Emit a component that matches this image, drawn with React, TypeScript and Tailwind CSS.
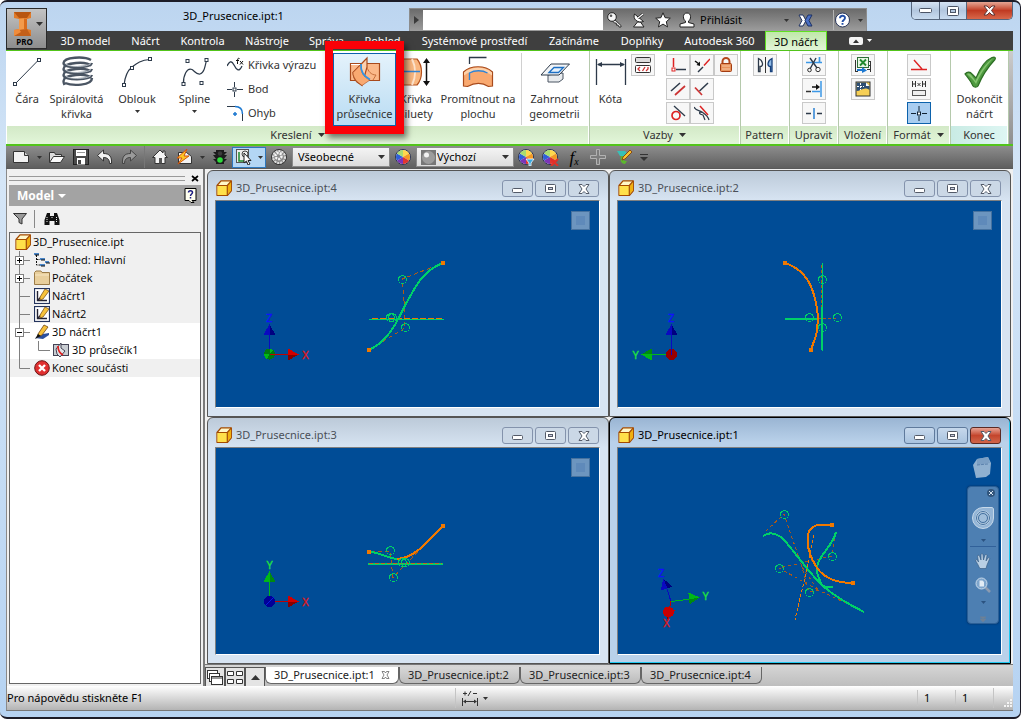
import type { ReactNode } from "react";

const FONT = "font-['Noto_Sans','Open_Sans',sans-serif]";
const GREEN = "#00d068";
const ORANGE = "#f07800";

/* ---------- small shared pieces ---------- */

function Icon({ w = 16, h = 16, children }: { w?: number; h?: number; children: ReactNode }) {
    return (
        <svg width={w} height={h} viewBox={`0 0 ${w} ${h}`} fill="none" className="shrink-0" aria-hidden="true">
            {children}
        </svg>
    );
}

function Caret({ color = "#333333" }: { color?: string }) {
    return (
        <Icon w={7} h={4}>
            <path d="M0 0h7L3.500 4z" fill={color} />
        </Icon>
    );
}

function SmallCaret({ color = "#333333" }: { color?: string }) {
    return (
        <Icon w={5} h={3}>
            <path d="M0 0h5L2.500 3z" fill={color} />
        </Icon>
    );
}

function Node({ x, y }: { x: number; y: number }) {
    return <rect x={x - 1.5} y={y - 1.5} width="3" height="3" fill="#fff" stroke="#2d3a4a" />;
}

function PartIcon() {
    return (
        <Icon>
            <path d="M1 5.500 5 .8h10.300v10L11.500 15.300H1z" fill="#fff7c8" stroke="#a34a00" strokeWidth="1.300" strokeLinejoin="round" />
            <path d="M1.500 6h9.500v9H1.500z" fill="#ffe04a" />
            <path d="M11.500 5.500 15 1.500v9l-3.500 4z" fill="#f0b010" />
            <path d="M1 5.500h10.300v9.800M11.300 5.500l4-4.700" stroke="#a34a00" strokeWidth="1.200" />
        </Icon>
    );
}

/* ---------- title bar ---------- */

function AppButton() {
    return (
        <button aria-label="Inventor PRO" className="absolute left-0 top-1.5 z-20 flex h-[41px] w-[41px] flex-col items-center border border-[#2a2a2a] bg-linear-to-b from-[#c4c4c4] to-[#8d8d8d]">
            <span className="flex w-full items-center gap-1 pl-1.5 pt-0.5">
                <Icon w={19} h={26}>
                    <path d="M1 1h17v6l-4 1v10l4 1v6H1v-6l5-1V8L1 7z" fill="#e07a28" />
                    <path d="M1 1h17l-4 6H6z" fill="#b85510" />
                    <path d="M6 8l8-1v11l-8 1z" fill="#f39a4a" />
                    <path d="M11 7.500h3V18h-3z" fill="#d86c1c" />
                    <path d="M1 25l5-6 8-1 4 7z" fill="#c4601a" />
                    <path d="M1 19l5-1 2 3-7 4z" fill="#f08c3c" />
                </Icon>
                <Caret />
            </span>
            <span className="pr-1 text-[8px] font-bold leading-[9px] text-black">PRO</span>
        </button>
    );
}

function SearchBar() {
    return (
        <div className="flex h-[23px] w-[458px] items-center self-end border border-b-0 border-[#8c8c8c] bg-linear-to-b from-[#6b6b6b] to-[#9d9d9d]">
            <button aria-label="Rozbalit" className="flex h-full w-[13px] items-center justify-center">
                <Icon w={5} h={8}>
                    <path d="M0 0v8l5-4z" fill="#3a3a3a" />
                </Icon>
            </button>
            <input aria-label="Hledat" className="h-5 w-[180px] bg-white px-1 text-[11px] outline-none" />
            <button aria-label="Klíč" className="flex w-6 justify-center">
                <Icon>
                    <path d="M7 7l7 6.500v1.500h-2l-1-2-1.500.2-.2-2L7.500 11 5.500 9z" fill="#e4e4e4" stroke="#222" strokeWidth=".9" />
                    <circle cx="5" cy="5" r="4.300" fill="#f6f6f6" stroke="#222" />
                    <circle cx="4" cy="3.800" r="1.300" fill="#555" />
                </Icon>
            </button>
            <button aria-label="Komunikační centrum" className="flex w-6 justify-center">
                <Icon>
                    <path d="M2.500 15h10.500l-3.500-5H6.500z" fill="#f6f6f6" stroke="#222" />
                    <path d="M3.500 2c-2 5 3 9.500 9 7.500z" fill="#fff" stroke="#222" />
                    <path d="M7 6l5-4" stroke="#222" strokeWidth="2.500" />
                    <path d="M7 6l5-4" stroke="#fff" strokeWidth="1.200" />
                </Icon>
            </button>
            <button aria-label="Oblíbené" className="flex w-6 justify-center">
                <Icon>
                    <path d="M8 .8l2.100 4.900 5.200.5-4 3.500 1.200 5.200L8 12.100 3.500 14.900l1.200-5.200-4-3.500 5.200-.5z" fill="#fff" stroke="#222" />
                </Icon>
            </button>
            <button className="flex w-[118px] items-center pl-1 pr-1 text-[11px] text-black">
                <Icon>
                    <path d="M8 1c5 0 4 7 1.500 8v1.500l5.500 1.500v3H1v-3l5.500-1.500V9C4 8 3 1 8 1z" fill="#fff" stroke="#222" />
                </Icon>
                <span className="flex-1 pl-[5px] text-left">Přihlásit</span>
                <SmallCaret />
            </button>
            <button aria-label="Exchange" className="mr-4 flex w-6 justify-center">
                <Icon w={15} h={13}>
                    <path d="M1 1h4l3 5.500L5 12H1l3-5.500z" fill="#fff" stroke="#1f3364" />
                    <path d="M14 1h-4L7 6.500 10 12h4l-3-5.500z" fill="#4a6fc4" stroke="#1f3364" />
                </Icon>
            </button>
            <span className="h-5 w-px bg-[#b5b5b5]" />
            <button aria-label="Nápověda" className="flex w-8 items-center gap-2 pl-px">
                <Icon w={15} h={16}>
                    <circle cx="7.500" cy="8" r="7" fill="#fff" stroke="#27345a" />
                    <path d="M5 6.300c0-3.300 5-3.300 5-.3 0 1.900-2.500 1.900-2.500 4M7.500 11v1.700" stroke="#2450a8" strokeWidth="1.900" />
                </Icon>
                <SmallCaret />
            </button>
        </div>
    );
}

function WindowButtons() {
    return (
        <div className="ml-11 flex h-[18px] w-[102px] self-start overflow-hidden rounded-b-[5px] border border-t-0 border-[#55657c]">
            <button aria-label="Minimalizovat" className="flex w-7 items-center justify-center border-r border-[#55657c] bg-linear-to-b from-[#d5e3f3] via-[#b3c7df] to-[#c9dcf0]">
                <Icon w={13} h={5}>
                    <rect x=".5" y=".5" width="12" height="4" rx="1" fill="#fff" stroke="#4c5566" />
                </Icon>
            </button>
            <button aria-label="Maximalizovat" className="flex w-[27px] items-center justify-center border-r border-[#55657c] bg-linear-to-b from-[#d5e3f3] via-[#b3c7df] to-[#c9dcf0]">
                <Icon w={12} h={10}>
                    <rect x=".5" y=".5" width="11" height="9" rx="1" fill="#fff" stroke="#4c5566" />
                    <rect x="3.500" y="3.500" width="5" height="3" fill="#b3c7df" stroke="#4c5566" />
                </Icon>
            </button>
            <button aria-label="Zavřít" className="flex flex-1 items-center justify-center bg-linear-to-b from-[#e4a594] via-[#c03a22] to-[#d8674a]">
                <Icon w={13} h={11}>
                    <path d="M1 1h3l2.500 2.500L9 1h3L8.500 5.500 12 10H9L6.500 7.500 4 10H1l3.500-4.500z" fill="#fff" stroke="#5b3434" />
                </Icon>
            </button>
        </div>
    );
}

/* ---------- ribbon ---------- */

const tabs = [
    { label: "3D model", width: "w-[71px]" },
    { label: "Náčrt", width: "w-[49px]" },
    { label: "Kontrola", width: "w-[65px]" },
    { label: "Nástroje", width: "w-16" },
    { label: "Správa", width: "w-[55px]" },
    { label: "Pohled", width: "w-[57px]" },
    { label: "Systémové prostředí", width: "w-[127px]" },
    { label: "Začínáme", width: "w-[72px]" },
    { label: "Doplňky", width: "w-16" },
    { label: "Autodesk 360", width: "w-[91px]" },
];

function RibbonTabs() {
    return (
        <nav className="flex h-[19px] shrink-0 items-center bg-[#3f3f3f] pl-11 text-[11px] text-white">
            {tabs.map((tab) => (
                <button key={tab.label} className={`${tab.width} shrink-0 whitespace-nowrap text-center leading-[18px]`}>
                    {tab.label}
                </button>
            ))}
            <button className="h-full w-[62px] shrink-0 whitespace-nowrap border border-b-0 border-[#5fe020] bg-linear-to-b from-[#bfe8a8] to-[#e2f5d8] leading-[17px] text-black">3D náčrt</button>
            <button aria-label="Sbalit pás" className="ml-[22px] flex items-center gap-1">
                <Icon w={14} h={8}>
                    <rect width="14" height="8" rx="2" fill="#f4f4f4" />
                    <path d="M4 6h6L7 2.500z" fill="#333" />
                </Icon>
                <SmallCaret color="#ffffff" />
            </button>
        </nav>
    );
}

function BigButton({ icon, lines, width, menu, active }: { icon: ReactNode; lines: string[]; width: string; menu?: boolean; active?: boolean }) {
    return (
        <button
            className={`${width} flex h-[73px] shrink-0 flex-col items-center whitespace-nowrap border pt-0.5 ${
                active ? "border-[#0c62ac] bg-linear-to-b from-[#e4f2fb] to-[#b9dcf3]" : "border-transparent"
            }`}
        >
            {icon}
            <span className="mt-[3px] flex flex-col items-center text-[11px] leading-[15px]">
                {lines.map((line) => (
                    <span key={line}>{line}</span>
                ))}
            </span>
            {menu && (
                <span className="mt-1">
                    <SmallCaret />
                </span>
            )}
        </button>
    );
}

function SmallButton({ icon, label, active }: { icon: ReactNode; label: string; active?: boolean }) {
    return (
        <button
            aria-label={label}
            className={`flex h-[22px] w-6 items-center justify-center border ${active ? "border-[#0c62ac] bg-[#a9cdf0]" : "border-[#c9c9c9] bg-[#f7f7f7]"}`}
        >
            {icon}
        </button>
    );
}

function Panel({ title, width, menu, blue, children }: { title: string; width: string; menu?: boolean; blue?: boolean; children: ReactNode }) {
    return (
        <section className={`${width} flex shrink-0 flex-col border-r border-[#b5c9ac]`}>
            <div className="flex h-[75px] pt-0.5">{children}</div>
            <h2
                className={`mr-px flex h-[18px] items-center justify-center gap-1.5 text-[11px] text-[#333] ${
                    blue ? "bg-linear-to-r from-[#c9ebe4] to-[#def6f3]" : "bg-linear-to-b from-[#d3e9c7] to-[#e2f6d9]"
                }`}
            >
                {title}
                {menu && <Caret />}
            </h2>
        </section>
    );
}

const lineIcon = (
    <Icon w={32} h={32}>
        <path d="M4 28 28 3.500" stroke="#2d3a4a" />
        <Node x={4} y={28} />
        <Node x={28} y={4} />
    </Icon>
);

const coilIcon = (
    <Icon w={34} h={32}>
        <g stroke="#4a5563" strokeWidth="2.400">
            <path d="M31 4C24 0 4 1 3.500 7c0 6 27 5.500 28.500 0" />
            <path d="M31 10c-4-5-27-4-27.500 3 0 6 27 5.500 28.500 0" />
            <path d="M31 16c-4-5-27-4-27.500 3 0 6 27 5.500 28.500 0" />
            <path d="M31 22c-4-5-27-4-27.500 3 0 1 0 2 1 4M32 22c0 8-20 8-27 5" />
        </g>
        <g stroke="#d3d9e0" strokeWidth=".8">
            <path d="M5 7c1 4.500 22 4.500 26 .5M5 13c1 4.500 22 4.500 26 .5M5 19c1 4.500 22 4.500 26 .5" />
        </g>
    </Icon>
);

const arcIcon = (
    <Icon w={32} h={32}>
        <path d="M3 29C4 20 6 15 11 11S20 4 29 3.500" stroke="#2d3a4a" strokeWidth="1.200" />
        <Node x={3} y={29} />
        <Node x={11} y={12} />
        <Node x={29} y={3} />
    </Icon>
);

const splineIcon = (
    <Icon w={32} h={32}>
        <path d="M4.500 28C4 20 8 11 13 13.500c3 2 4 5 8 4.500 4-1 5-7 6.500-14" stroke="#2d3a4a" strokeWidth="1.200" />
        <Node x={4.500} y={28} />
        <Node x={8.500} y={5} />
        <Node x={22.500} y={27} />
        <Node x={27.500} y={4} />
    </Icon>
);

const intersectionIcon = (
    <Icon w={32} h={32}>
        <path d="M1.500 7.500h29v17h-29z" fill="#fbb98a" stroke="#a84a1c" strokeWidth="1.200" />
        <path d="M4 16.500 18 2v9L13 29.500 8 26C5 23 4 20 4 16.500z" fill="#fcd0ae" stroke="#a84a1c" strokeWidth="1.200" />
        <path d="M12 8.500C11 15 14 21 21 24l-8 5.500-5-4C5 22 4 19 4 16.500z" fill="#f9a970" stroke="#a84a1c" strokeWidth=".6" />
        <path d="M18 11c1 4 4 8 9 8l-3 5" stroke="#c8703c" />
        <path d="M12 8c-.5 7 2 12 9 15.500" stroke="#2f94e6" strokeWidth="1.700" />
        <path d="M2 8.500h9" stroke="#fff" />
    </Icon>
);

const silhouetteIcon = (
    <Icon w={38} h={32}>
        <path d="M0 3h20c6 7 6 19 0 26H0z" fill="#f9b780" stroke="#b4501c" strokeWidth="1.200" />
        <path d="M15 3c4 8 4 18 0 26" stroke="#fde3cc" strokeWidth="2" />
        <path d="M2 15.500h21" stroke="#2f84d6" strokeWidth="1.500" />
        <path d="M29.500 5v22" stroke="#111" strokeWidth="1.500" />
        <path d="M26 7l3.500-5L33 7zM26 25l3.500 5 3.500-5z" fill="#111" />
    </Icon>
);

const projectIcon = (
    <Icon w={32} h={32}>
        <path d="M7.500 8V1.500h17" stroke="#2d3a4a" strokeWidth="1.300" />
        <path d="M1.500 16C9 9 23 9 30.500 16v14l-4 .5c-6-4-14-4-21 0l-4-.5z" fill="#f9a970" stroke="#a84a1c" strokeWidth="1.200" />
        <path d="M2 16.500C9 10 23 10 30 16.500v3c-7-6-21-6-28 0z" fill="#fcd2ac" />
        <path d="M7.500 24v-7c5-3 13-3 18 0" stroke="#2f84d6" strokeWidth="1.400" />
    </Icon>
);

const includeIcon = (
    <Icon w={32} h={32}>
        <path d="M9 19v7h11l4-3v-6z" fill="#e8ebee" stroke="#4a5563" />
        <path d="M2 19 12 8h18.500L20 19z" fill="#f3f5f7" stroke="#2d3a4a" />
        <path d="M10 16.500l5-5h9.500l-5 5z" fill="#e6f1fb" stroke="#1c6fc4" strokeWidth="1.300" />
    </Icon>
);

const dimensionIcon = (
    <Icon w={32} h={32}>
        <path d="M1.500 3v26M30.500 3v26M3 8.500h26" stroke="#2d3a4a" strokeWidth="1.300" />
        <path d="M2 8.500l5-2.500v5zM30 8.500 25 6v5z" fill="#2d3a4a" />
    </Icon>
);

function DrawPanel() {
    return (
        <Panel title="Kreslení" width="w-[583px]" menu>
            <BigButton icon={lineIcon} lines={["Čára"]} width="w-10" />
            <BigButton icon={coilIcon} lines={["Spirálovitá", "křivka"]} width="w-[59px]" />
            <BigButton icon={arcIcon} lines={["Oblouk"]} width="w-[62px]" menu />
            <BigButton icon={splineIcon} lines={["Spline"]} width="w-[53px]" menu />
            <div className="flex w-[105px] shrink-0 flex-col pl-1.5 text-[11px]">
                <button className="flex h-6 items-center gap-1 whitespace-nowrap">
                    <Icon w={17}>
                        <path d="M0 9c3-6 5-5 7-1s5 8 8 1" stroke="#2d3a4a" strokeWidth="1.300" />
                        <path d="M12.500 1.500c-2-1-2 1-2 5.500M9 3.500h3M13 4l3 3.500M16 4l-3 3.500" stroke="#111" />
                    </Icon>
                    Křivka výrazu
                </button>
                <button className="flex h-6 items-center gap-1 whitespace-nowrap">
                    <Icon w={17}>
                        <path d="M0 8.500h5M10 8.500h6M7.500 1v5M7.500 11v5" stroke="#2d3a4a" />
                        <Node x={7.500} y={8.500} />
                    </Icon>
                    Bod
                </button>
                <button className="flex h-6 items-center gap-1 whitespace-nowrap">
                    <Icon w={17}>
                        <path d="M0 1.500h8M15.500 9v7" stroke="#2d3a4a" />
                        <path d="M8 1.500c5 0 7.500 3 7.500 7.500" stroke="#1c78d0" strokeWidth="1.500" />
                        <path d="M6 9h4M8 7v4" stroke="#1c78d0" strokeWidth="1.500" />
                    </Icon>
                    Ohyb
                </button>
            </div>
            {/* Highlighted tool with its callout frame */}
            <div className="relative ml-[7px] mr-px w-[63px] shrink-0">
                <BigButton icon={intersectionIcon} lines={["Křivka", "průsečnice"]} width="w-[63px]" active />
                <div className="pointer-events-none absolute -inset-x-2 -bottom-2 -top-3 z-20 border-[8px] border-[#fb0007] shadow-[3px_4px_6px_rgba(0,0,0,0.5)]" />
            </div>
            <BigButton icon={silhouetteIcon} lines={["Křivka", "siluety"]} width="w-[38px]" />
            <BigButton icon={projectIcon} lines={["Promítnout na", "plochu"]} width="w-[86px]" />
            <span className="h-[72px] w-px bg-[#d0d0d0]" />
            <BigButton icon={includeIcon} lines={["Zahrnout", "geometrii"]} width="w-[65px]" />
        </Panel>
    );
}

function ConstraintPanel() {
    return (
        <Panel title="Vazby" width="w-[151px]" menu>
            <BigButton icon={dimensionIcon} lines={["Kóta"]} width="w-[41px]" />
            <div className="pt-px">
                <SmallButton
                    label="Automatické vazby"
                    icon={
                        <Icon w={18}>
                            <rect x="1.500" y=".5" width="15" height="5" rx="1" fill="#ddd" stroke="#333" />
                            <rect x="1.500" y="8.500" width="15" height="7" rx="1" fill="#fff" stroke="#333" />
                            <path d="M6 10l-2 2 2 2M11 10l-2.500 4M14 10v2l-2 2" stroke="#c33" strokeWidth="1.300" />
                        </Icon>
                    }
                />
            </div>
            <div className="ml-[11px] grid h-[72px] grid-cols-3 content-start gap-y-0.5 pt-px">
                <SmallButton label="Kolmost" icon={<Icon><path d="M3.500 1v9" stroke="#d22" strokeWidth="1.500" /><path d="M6 12.500h10" stroke="#2d3a4a" strokeWidth="1.500" /><rect x="2" y="11" width="3" height="3" fill="#fff" stroke="#d22" /></Icon>} />
                <SmallButton label="Kolineární" icon={<Icon><path d="M1 4l4 3" stroke="#111" strokeWidth="1.500" /><path d="M6 9V4.500L2.500 8z" fill="#111" /><path d="M4 15l5-5" stroke="#2d3a4a" strokeWidth="1.500" /><path d="M10 8.500 16 2" stroke="#d22" strokeWidth="1.500" /></Icon>} />
                <SmallButton label="Pevná" icon={<Icon><path d="M4.500 7V4.500a3.500 3.500 0 0 1 7 0V7" stroke="#b5481c" strokeWidth="2" /><rect x="2.500" y="6.500" width="11" height="8" rx="1" fill="#e8925c" stroke="#a33c12" /><path d="M4 9h8M4 12h8" stroke="#f8c7a4" /></Icon>} />
                <SmallButton label="Rovnoběžnost" icon={<Icon><path d="M1 10l9-8" stroke="#2d3a4a" strokeWidth="1.500" /><path d="M5 14 15 5" stroke="#c33" strokeWidth="1.700" /></Icon>} />
                <SmallButton label="Kolmá" icon={<Icon><path d="M5.500 10 14 2" stroke="#2d3a4a" strokeWidth="1.500" /><path d="M1 6.500 8 14" stroke="#c33" strokeWidth="1.700" /></Icon>} />
                <span />
                <SmallButton label="Tečnost" icon={<Icon><circle cx="6" cy="10.500" r="4" stroke="#d22" strokeWidth="1.700" /><path d="M4 1l11 10" stroke="#2d3a4a" strokeWidth="1.300" /></Icon>} />
                <SmallButton label="Hladkost" icon={<Icon><path d="M0 2c2 4 5 3 8 5s6 4 7 8M8 7.500C5 6 4 9 9 10l2 5" stroke="#2d3a4a" strokeWidth="1.200" /><path d="M6 1l8 9" stroke="#d22" strokeWidth="1.500" /></Icon>} />
            </div>
        </Panel>
    );
}

function Ribbon() {
    return (
        <div className="flex h-24 shrink-0 border-b-2 border-t border-[#52c41a] bg-white pl-px text-[#333]">
            <DrawPanel />
            <ConstraintPanel />
            <Panel title="Pattern" width="w-[49px]">
                <div className="mx-auto pt-px">
                    <SmallButton label="Zrcadlit" icon={<Icon><path d="M1.500 1.500v13h1.500v-5c4 0 3-6-1.500-8z" fill="#fff" stroke="#2d3a4a" strokeWidth="1.300" /><path d="M8.500 0v16" stroke="#333" /><path d="M15 1.500v13h-1.500v-5c-4 0-3-6 1.500-8z" fill="#8fb9e4" stroke="#16407c" strokeWidth="1.300" /></Icon>} />
                </div>
            </Panel>
            <Panel title="Upravit" width="w-[49px]">
                <div className="mx-auto flex flex-col gap-0.5 pt-px">
                    <SmallButton label="Oříznout" icon={<Icon><path d="M0 5.500h16M13.500 0v5" stroke="#3b97e6" strokeWidth="1.700" /><path d="M4 1l7 10M10 1 4 12" stroke="#2d3a4a" strokeWidth="1.400" /><circle cx="3.500" cy="13" r="1.800" stroke="#333" /><circle cx="12" cy="12.500" r="2.200" stroke="#333" /></Icon>} />
                    <SmallButton label="Prodloužit" icon={<Icon><path d="M15 0v16" stroke="#3b97e6" strokeWidth="1.500" /><path d="M0 10.500h5" stroke="#333" strokeWidth="1.300" /><path d="M6 10.500h8" stroke="#3b97e6" strokeWidth="1.500" /><path d="M6 6h5" stroke="#111" strokeWidth="1.500" /><path d="M10 3l4 3-4 3z" fill="#111" /></Icon>} />
                    <SmallButton label="Rozdělit" icon={<Icon><path d="M0 8.500h5M11 8.500h5" stroke="#2d3a4a" strokeWidth="1.400" /><path d="M8 3v11" stroke="#1c78d0" strokeWidth="1.400" /></Icon>} />
                </div>
            </Panel>
            <Panel title="Vložení" width="w-[49px]">
                <div className="mx-auto flex flex-col gap-0.5 pt-px">
                    <SmallButton label="Importovat body" icon={<Icon w={18}><path d="M15 4.500h2M15 8.500h2M13 12.500h4M16.500 4v11M1.500 3v12M1 14.500h3" stroke="#333" /><rect x="3.500" y=".5" width="11" height="10" fill="#e9f7e6" stroke="#2d6e38" /><path d="M6 2.500l6 6M12 2.500l-6 6" stroke="#1f8a2e" strokeWidth="1.900" /><path d="M3 12h5v-2l5 3.500L8 16v-2H3z" fill="#1c78d0" /></Icon>} />
                    <SmallButton label="Vložit obrázek" icon={<Icon><rect x="1" y="1" width="14" height="14" fill="#f6cf55" stroke="#333" /><path d="M1.500 1.500H11l3.500 3.500v4C9 5 6 10 1.500 10z" fill="#2e4f74" /><path d="M11 1.500v3.500h3.500z" fill="#fff" /><path d="M2 5.500h7M5.500 2v7" stroke="#fff" strokeDasharray="2 1" /></Icon>} />
                </div>
            </Panel>
            <Panel title="Formát" width="w-[63px]" menu>
                <div className="mx-auto flex flex-col gap-0.5 pt-px">
                    <SmallButton label="Osa" icon={<Icon><path d="M0 12.500h16M3 3l8 9" stroke="#d22" strokeWidth="1.400" /></Icon>} />
                    <SmallButton label="Zobrazit parametr" icon={<Icon><path d="M1.500 0v6M1.500 3h3M4.500 0v6M11.500 0v6M11.500 3h3M14.500 0v6M6.500 2l3 3M9.500 2l-3 3" stroke="#333" /><rect x="1.500" y="9.500" width="13" height="5" fill="#eee" stroke="#555" /></Icon>} />
                    <SmallButton label="Bod středu" active icon={<Icon><path d="M0 8.500h5M11 8.500h5M8 1v5M8 11v5" stroke="#123" /><rect x="6.500" y="7" width="3" height="3" fill="#fff" stroke="#123" /></Icon>} />
                </div>
            </Panel>
            <Panel title="Konec" width="w-[58px]" blue>
                <BigButton
                    width="w-full"
                    lines={["Dokončit", "náčrt"]}
                    icon={
                        <Icon w={34} h={32}>
                            <path d="M2 18c2-2 5-3 7 0l4 4C17 12 23 4 29 1.500c3-1 4 0 3 2C25 11 19 20 15 30c-1 1.500-4 1.500-5 0C8 25 5 22 2 18z" fill="#4e9a40" stroke="#2d6e24" strokeWidth="1.200" />
                            <path d="M4 18c2-1 4 0 5 2l3.500 5C17 15 23 7 30 2.500 22 11 17 19 13 28 10 23 7 21 4 18z" fill="#84c46e" />
                        </Icon>
                    }
                />
            </Panel>
            <div className="flex-1 bg-linear-to-b from-[#cccccc] to-[#8f8f8f]" />
        </div>
    );
}

/* ---------- quick toolbar ---------- */

function Wheel({ badge }: { badge?: ReactNode }) {
    return (
        <Icon w={17} h={17}>
            <circle cx="8" cy="8" r="7.500" fill="#eee" stroke="#2c3350" />
            <path d="M8 8V1a7 7 0 0 1 6 3.500z" fill="#ffd84d" />
            <path d="M8 8l6-3.500a7 7 0 0 1 0 7z" fill="#f59a23" />
            <path d="M8 8l6 3.500A7 7 0 0 1 8 15z" fill="#e0352f" />
            <path d="M8 8v7a7 7 0 0 1-6-3.500z" fill="#7a35b8" />
            <path d="M8 8l-6 3.500a7 7 0 0 1 0-7z" fill="#2f5fd8" />
            <path d="M8 8 2 4.500A7 7 0 0 1 8 1z" fill="#a8dc70" />
            {badge}
        </Icon>
    );
}

function ToolButton({ label, width = "w-6", children }: { label: string; width?: string; children: ReactNode }) {
    return (
        <button aria-label={label} className={`${width} flex shrink-0 items-center justify-center gap-1.5`}>
            {children}
        </button>
    );
}

function Combo({ value, label, icon }: { value: string; label: string; icon?: ReactNode }) {
    return (
        <div className="relative flex h-5 w-[98px] shrink-0 items-center border border-[#8b8b8b] bg-linear-to-b from-[#f4f4f4] to-[#dcdcdc] pl-1">
            {icon}
            <select aria-label={label} className="h-[18px] flex-1 appearance-none bg-transparent pl-px text-[11px] leading-[18px] text-black outline-none">
                <option>{value}</option>
            </select>
            <span className="pointer-events-none absolute right-1">
                <Caret />
            </span>
        </div>
    );
}

function Toolbar() {
    return (
        <div className="flex h-[23px] shrink-0 items-center border-b border-[#5a5a5a] bg-linear-to-b from-[#8d8d8d] to-[#5f5f5f] pl-[3px]">
            <ToolButton label="Nový">
                <Icon><path d="M.5 2.500h11l4 4v7H.5z" fill="#f2f2f2" stroke="#333" /><path d="M11.500 2.500v4h4" fill="#ccc" stroke="#333" /></Icon>
            </ToolButton>
            <ToolButton label="Možnosti nového" width="w-3"><SmallCaret /></ToolButton>
            <ToolButton label="Otevřít">
                <Icon><path d="M.5 13.500v-10h5l1 2h6v2" fill="#ddd" stroke="#333" /><path d="M.5 13.500l4-6h11l-4 6z" fill="#fafafa" stroke="#333" /></Icon>
            </ToolButton>
            <ToolButton label="Uložit">
                <Icon><rect x=".5" y=".5" width="15" height="15" fill="#4a4a4a" stroke="#222" /><rect x="3" y="1" width="10" height="6" fill="#fff" /><rect x="4" y="9" width="8" height="6.500" fill="#fff" /><path d="M5 11h3v4H5z" fill="#444" /><path d="M4 3.500h8" stroke="#999" /></Icon>
            </ToolButton>
            <ToolButton label="Zpět">
                <Icon><path d="M.5 6.500 6.500 1v3.500c6 0 8.500 3 8 10h-2c0-4-2-6-6-6V12z" fill="#f2f2f2" stroke="#333" /></Icon>
            </ToolButton>
            <ToolButton label="Vpřed">
                <Icon><path d="M15.500 6.500 9.500 1v3.500c-6 0-8.500 3-8 10h2c0-4 2-6 6-6V12z" fill="#9a9a9a" stroke="#444" /></Icon>
            </ToolButton>
            <span className="mx-[3px] h-full w-px bg-[#777]" />
            <ToolButton label="Domů">
                <Icon><path d="M.5 8.500 8 1l3 3V2h2v4l2.500 2.500H13v6H3v-6z" fill="#f4f4f4" stroke="#333" /><rect x="7" y="9" width="3" height="5.500" fill="#555" /></Icon>
            </ToolButton>
            <ToolButton label="Aktualizovat">
                <Icon><path d="M2.500 3.500h8l5 4v7h-13z" fill="#f2f2f2" stroke="#333" /><path d="M11 0 1 9h5l-4 6L13 7H8z" fill="#ffc726" stroke="#d2540e" /></Icon>
            </ToolButton>
            <ToolButton label="Možnosti aktualizace" width="w-3"><SmallCaret /></ToolButton>
            <ToolButton label="Stav">
                <Icon><path d="M4 1h8v14H4zM1 3h14l-3 3h3l-3 4h3l-3 3H4l-3-3h3L1 6h3z" fill="#1c1c1c" /><circle cx="8" cy="4.500" r="2.200" fill="#3c3c3c" /><circle cx="8" cy="11" r="2.800" fill="#2fdc3c" /></Icon>
            </ToolButton>
            <button aria-label="Výběr" className="flex h-[21px] w-[34px] shrink-0 items-center justify-center gap-1 border border-[#2e78be] bg-[#b3d6f4]">
                <Icon w={18}><rect x=".5" y=".5" width="12" height="13" fill="#eee" stroke="#555" /><path d="M3 3v9h5" stroke="#1a8a2a" strokeWidth="1.500" /><circle cx="9" cy="5" r="3" stroke="#444" /><path d="M8 4v10l2.500-2 1.500 4 2-1-2-3.500h3z" fill="#fff" stroke="#222" /></Icon>
                <SmallCaret />
            </button>
            <ToolButton label="Materiály" width="w-[26px]">
                <Icon><circle cx="8" cy="8" r="7.500" fill="#8b8b8b" stroke="#333" /><circle cx="8" cy="8" r="6" stroke="#dedede" strokeWidth="2" strokeDasharray="2 1" /><circle cx="7.500" cy="7" r="3" stroke="#f4f4f4" strokeWidth="2.500" strokeDasharray="2 1" /></Icon>
            </ToolButton>
            <Combo label="Materiál" value="Všeobecné" />
            <ToolButton label="Vzhled" width="w-[26px]"><Wheel /></ToolButton>
            <Combo
                label="Vzhled součásti"
                value="Výchozí"
                icon={<Icon w={15} h={15}><rect width="15" height="15" fill="#777" /><circle cx="7.500" cy="7.500" r="6.500" fill="#9c9c9c" /><circle cx="5.500" cy="5" r="2.500" fill="#f2f2f2" /></Icon>}
            />
            <ToolButton label="Upravit vzhled"><Wheel badge={<path d="M8 10h8l-3 4v3h-2v-3z" fill="#39a8e0" stroke="#fff" strokeWidth=".8" />} /></ToolButton>
            <ToolButton label="Vymazat vzhled"><Wheel badge={<path d="M9 10l7 7M16 10l-7 7" stroke="#e03028" strokeWidth="2" />} /></ToolButton>
            <ToolButton label="Parametry"><span className="font-['Liberation_Serif',serif] text-[17px] italic leading-none text-black">f<sub className="text-[10px]">x</sub></span></ToolButton>
            <ToolButton label="Přidat">
                <Icon><path d="M6.500 .5h3v6h6v3h-6v6h-3v-6h-6v-3h6z" fill="#7d7d7d" stroke="#b2b2b2" /></Icon>
            </ToolButton>
            <ToolButton label="Pomůcka" width="w-7">
                <Icon><path d="M1 2h8l3 3-2 2H4z" fill="#38c0b8" /><path d="M7 7c-1 4 1 5 4 5l-2 3c-4 0-5-4-4-8z" fill="#5cb82e" /><path d="M14 1 7 8l-1 3 3-1 7-7z" fill="#f6c22e" stroke="#8a4a12" /></Icon>
            </ToolButton>
            <ToolButton label="Přizpůsobit" width="w-3">
                <Icon w={8} h={7}><path d="M0 .5h8" stroke="#333" /><path d="M0 3h8L4 7z" fill="#333" /></Icon>
            </ToolButton>
        </div>
    );
}

/* ---------- browser panel ---------- */

const sketchIcon = (
    <Icon>
        <rect x=".5" y=".5" width="15" height="15" fill="#fff" stroke="#24345e" strokeWidth="1.200" />
        <path d="M3.500 3v9.500H13M4 12l6-6" stroke="#223" strokeWidth="1.400" />
        <path d="M6 9 11 1l4 2-6 8-3 1z" fill="#f7c23a" stroke="#6d4310" strokeWidth=".7" />
    </Icon>
);

const treeRows = [
    { label: "Pohled: Hlavní", toggle: "+", icon: <Icon><path d="M2.500 3v10H6M2.500 7.500H6" stroke="#111" strokeDasharray="2 1" /><path d="M0 1h5v2H0zM6 6h5v2H6zM11 9h4v2h-4zM6 12h5v2H6z" fill="#4a86c8" /><path d="M1 3h4M7 8h4M12 11h4M7 14h4" stroke="#111" /></Icon> },
    { label: "Počátek", toggle: "+", icon: <Icon><path d="M.5 2.500 2 1h5l1 1.500h7.500v12H.5z" fill="#e9cf9c" stroke="#9c7c48" /><path d="M1 5h14" stroke="#f7e6c2" /></Icon> },
    { label: "Náčrt1", icon: sketchIcon },
    { label: "Náčrt2", icon: sketchIcon },
    { label: "3D náčrt1", toggle: "-", icon: <Icon><path d="M1 14l4-1 4-3 6-1v2l-6 4z" fill="#2a4f9e" /><path d="M4 10 10 1l4 2-6 8-4 2z" fill="#f7c23a" stroke="#6d4310" strokeWidth=".8" /><path d="M1 15l3-5 3 2z" fill="#111" /></Icon>, open: true },
];

function TreeLines({ toggle, last }: { toggle?: string; last?: boolean }) {
    return (
        <Icon w={24} h={18}>
            <path d={last ? "M9.500 0v9.500H20" : "M9.500 0v18M9.500 9.500H20"} stroke="#808080" />
            {toggle && <rect x="5.500" y="5.500" width="8" height="8" fill="#fff" stroke="#808080" />}
            {toggle && <path d={toggle === "+" ? "M7 9.500h5M9.500 7v5" : "M7 9.500h5"} stroke="#000" />}
        </Icon>
    );
}

function BrowserPanel() {
    return (
        <aside className="flex w-[199px] shrink-0 flex-col border-l border-r-2 border-l-[#8a8a8a] border-r-[#7a7a7a] bg-[#f0f0f0] px-0.5 pt-0.5">
            <div className="flex h-3.5 shrink-0 items-center gap-1.5 pr-0.5">
                <span className="h-[5px] flex-1 border-y border-[#9a9a9a]" />
                <button aria-label="Zavřít panel">
                    <Icon w={8} h={7}><path d="M1 1l6 5M7 1 1 6" stroke="#000" strokeWidth="1.700" /></Icon>
                </button>
            </div>
            <div className="flex h-[21px] shrink-0 items-center justify-between bg-[#a3a3a3] pl-2 pr-1">
                <button className="flex items-center gap-1 text-[12px] font-bold text-white">
                    Model
                    <Icon w={8} h={4}><path d="M0 0h8L4 4z" fill="#fff" /></Icon>
                </button>
                <button aria-label="Nápověda panelu">
                    <Icon w={13} h={15}>
                        <path d="M1 .5h11v12h-4l2 2H7l-2-2H1z" fill="#fffff0" stroke="#000" />
                        <path d="M4.500 4.500c0-2.500 4-2.500 4 0 0 1.500-2 1.500-2 3.500M6.500 9v1.500" stroke="#1c1c80" strokeWidth="1.500" />
                    </Icon>
                </button>
            </div>
            <div className="flex h-[26px] shrink-0 items-center pl-1">
                <button aria-label="Filtr">
                    <Icon><path d="M.5 2.500h13L9 8v5l-3-1.500V8z" fill="#999" stroke="#333" /></Icon>
                </button>
                <span className="mx-[5px] h-[18px] w-px bg-[#888]" />
                <button aria-label="Najít" className="ml-1">
                    <Icon><path d="M3 2h3v3h4V2h3l2.500 7v5h-5v-4h-5v4H.5V9z" fill="#111" /><path d="M3 6v6M12.500 6v6M8 6v2" stroke="#eee" strokeDasharray="1 1" /></Icon>
                </button>
            </div>
            <ul className="mb-0.5 flex-1 border border-[#666] bg-white font-['Open_Sans',sans-serif] text-[11px] leading-[18px] text-black">
                <li className="flex h-[18px] items-center gap-0.5 bg-[#f0f0f0] pl-[5px]">
                    <PartIcon />
                    3D_Prusecnice.ipt
                </li>
                {treeRows.map((row) => (
                    <li key={row.label} className={`flex h-[18px] items-center ${row.open ? "bg-white" : "bg-[#f0f0f0]"}`}>
                        <TreeLines toggle={row.toggle} />
                        {row.icon}
                        <span className="pl-0.5">{row.label}</span>
                    </li>
                ))}
                <li className="flex h-[18px] items-center">
                    <Icon w={43} h={18}><path d="M9.500 0v18M28.500 0v9.500H40" stroke="#808080" /></Icon>
                    <Icon><rect x=".5" y="2.500" width="15" height="11" fill="#c9cdd2" stroke="#445" /><path d="M3 7 8 1v5l4 3-5 6-3-3z" fill="#e2e5e8" stroke="#445" /><path d="M5 4c0 4 1 7 5 9" stroke="#e02020" strokeWidth="1.700" /></Icon>
                    <span className="pl-[3px]">3D průsečík1</span>
                </li>
                <li className="flex h-[18px] items-center bg-[#f0f0f0]">
                    <TreeLines last />
                    <Icon><circle cx="8" cy="8" r="7.300" fill="#e03030" stroke="#6a1414" /><path d="M5 5l6 6M11 5l-6 6" stroke="#fff" strokeWidth="2.400" /></Icon>
                    <span className="pl-0.5">Konec součásti</span>
                </li>
            </ul>
        </aside>
    );
}

/* ---------- model views ---------- */

function Cone({ x, y, angle, color }: { x: number; y: number; angle: number; color: "blue" | "red" | "green" }) {
    const fill = { blue: ["#0a0ac0", "#000080"], red: ["#d00000", "#880000"], green: ["#00b818", "#008a10"] }[color];
    return (
        <g transform={`translate(${x} ${y}) rotate(${angle})`}>
            <path d="M-5-6 6 0-5 6z" fill={fill[0]} />
            <path d="M-5 1 6 0-5 6z" fill={fill[1]} />
        </g>
    );
}

function AxisText({ x, y, color, children }: { x: number; y: number; color: string; children: string }) {
    return (
        <text x={x} y={y + 4} textAnchor="middle" fontSize="11" fill={color} stroke={color} strokeWidth=".3">
            {children}
        </text>
    );
}

function Handle({ x, y }: { x: number; y: number }) {
    return <rect x={x - 2} y={y - 2} width="4" height="4" fill={ORANGE} />;
}

function Points({ at }: { at: [number, number][] }) {
    return (
        <g stroke={GREEN}>
            {at.map(([x, y]) => (
                <circle key={`${x}-${y}`} cx={x} cy={y} r="4" />
            ))}
        </g>
    );
}

function Scene({ children }: { children: ReactNode }) {
    return (
        <svg viewBox="0 0 383 206" fill="none" className="block h-full w-full" shapeRendering="crispEdges" aria-hidden="true">
            {children}
        </svg>
    );
}

const frontScene = (
    <Scene>
        <path d="M188 100 186 78 227 62M188 100l1 27-23 14" stroke="#b05a14" strokeDasharray="4 3" />
        <path d="M153 118.500h75" stroke={GREEN} />
        <path d="M156 117.500h70" stroke={ORANGE} strokeDasharray="6 2" />
        <path d="M153 149C176 138 183 115 192 99S208 69 227 62" stroke={GREEN} strokeWidth="2" />
        <Points at={[[186.500, 78.500], [174.500, 116.500], [176.500, 116.500], [189.500, 126.500]]} />
        <Handle x={153} y={149} />
        <Handle x={227} y={62} />
        <path d="M53.500 153v-22" stroke="#0a0ac0" />
        <circle cx="53.500" cy="153" r="5.500" fill="#007a10" />
        <path d="M53.500 153v-5.500a5.500 5.500 0 0 1 4 2zM53.500 153h-5.500a5.500 5.500 0 0 0 3 5z" fill="#00b818" />
        <path d="M54 153.500h20" stroke="#c00000" />
        <Cone x={53.500} y={129} angle={-90} color="blue" />
        <Cone x={77} y={153.500} angle={0} color="red" />
        <AxisText x={53.500} y={117} color="#1010ff">Z</AxisText>
        <AxisText x={89.500} y={153.500} color="#e01818">X</AxisText>
    </Scene>
);

const sideScene = (
    <Scene>
        <path d="M204.500 62v88" stroke={GREEN} />
        <path d="M204 105v44M167 118h32" stroke={GREEN} strokeWidth="2" />
        <path d="M203.500 64v42M200 117.500h18" stroke="#b05a14" strokeDasharray="3 2" />
        <path d="M167 62c15 5 25 17 29 32 4 13 5 22 3 35-1 8-4 13-6 20" stroke={ORANGE} strokeWidth="2" />
        <Points at={[[204.500, 78.500], [191.500, 116.500], [219.500, 116.500], [204.500, 126.500]]} />
        <Handle x={167} y={62} />
        <Handle x={193} y={149} />
        <path d="M53.500 153v-22" stroke="#0a0ac0" />
        <path d="M53 153.500H34" stroke="#00b818" />
        <circle cx="53.500" cy="153.500" r="5.500" fill="#980000" />
        <path d="M53.500 153.500V148" stroke="#0a0ac0" />
        <Cone x={53.500} y={129} angle={-90} color="blue" />
        <Cone x={29} y={153.500} angle={180} color="green" />
        <AxisText x={53.500} y={117} color="#1010ff">Z</AxisText>
        <AxisText x={17.500} y={153.500} color="#20e040">Y</AxisText>
    </Scene>
);

const topScene = (
    <Scene>
        <path d="M155 103.500h19l3 26 25-26" stroke="#b05a14" strokeDasharray="4 3" />
        <path d="M152 116h75" stroke={GREEN} strokeWidth="2" />
        <path d="M153 115.500h73" stroke="#c06a20" strokeDasharray="4 2" />
        <path d="M153 104c11 0 17 6 28 7" stroke={GREEN} strokeWidth="2" />
        <path d="M181 111c16-1 27-13 46-33" stroke={ORANGE} strokeWidth="2" />
        <Points at={[[174.500, 102.500], [177.500, 129.500], [186.500, 114.500], [189.500, 114.500]]} />
        <Handle x={153} y={104} />
        <Handle x={227} y={78} />
        <path d="M53.500 153v-22" stroke="#00b818" />
        <path d="M54 153.500h20" stroke="#c00000" />
        <circle cx="53.500" cy="153.500" r="5.500" fill="#000098" />
        <path d="M53.500 153.500l4-4M53.500 153.500l-4 4" stroke="#0a20e0" />
        <Cone x={53.500} y={129} angle={-90} color="green" />
        <Cone x={77} y={153.500} angle={0} color="red" />
        <AxisText x={53.500} y={117} color="#20e040">Y</AxisText>
        <AxisText x={89.500} y={153.500} color="#e01818">X</AxisText>
    </Scene>
);

const isoScene = (
    <Scene>
        <path d="M148 83l18-17 18 53 7 25 9-2 45 21M200 142l-39-22 53-12 3-22M184 119l16 23" stroke="#a8581a" strokeDasharray="3 3" />
        <path d="M195.500 87c-4 28-13 59-18.500 85" stroke={ORANGE} strokeDasharray="3 2" />
        <path d="M145 88c10-7 19 0 27 11 12 15 22 29 34 40 12 10 26 18 40 25" stroke={GREEN} strokeWidth="2" />
        <path d="M218 84c-3 14-18 24-19 35-1 7 3 14 5 18 3 3 7 2 11 2" stroke={GREEN} strokeWidth="2" />
        <path d="M214 77c-12-1-21-1-24 9-2 12 2 23 9 34 8 11 20 15 36 15" stroke={ORANGE} strokeWidth="2" />
        <Points at={[[166.500, 66.500], [214.500, 108.500], [161.500, 120.500], [191.500, 144.500]]} />
        <Handle x={214} y={77} />
        <Handle x={235} y={135} />
        <path d="M53 153.500 48 138" stroke="#0a0ac0" />
        <path d="M53 153.500 73 151" stroke="#00b818" />
        <path d="M53 153.500 51 163" stroke="#c00000" />
        <Cone x={47} y={136} angle={-108} color="blue" />
        <Cone x={76} y={150} angle={-6} color="green" />
        <Cone x={50.500} y={166} angle={100} color="red" />
        <circle cx="50.500" cy="164" r="5.500" fill="#c80000" />
        <AxisText x={43.500} y={125} color="#1010ff">Z</AxisText>
        <AxisText x={87.500} y={148} color="#20e040">Y</AxisText>
        <AxisText x={48.500} y={175} color="#e01818">X</AxisText>
    </Scene>
);

function NavigationBar() {
    return (
        <>
            <div className="absolute right-[9px] top-2">
                <Icon w={20} h={23}>
                    <path d="M5 3 16 1l3 6-1 11-4 3-10 1L1 9z" fill="#8fb0d0" />
                    <path d="M5 3 16 1l2 6-13 2z" fill="#7b9fc4" />
                    <path d="M5 9l11-1" stroke="#5c83ae" strokeDasharray="3 1" />
                </Icon>
            </div>
            <div className="absolute right-0.5 top-[38px] flex h-[138px] w-8 flex-col items-center rounded border border-[#2b5f96] bg-[#4d7fb2] shadow-[0_0_2px_#002a5c]">
                <button aria-label="Zavřít navigaci" className="mr-[3px] mt-0.5 self-end">
                    <Icon w={8} h={8}><circle cx="4" cy="4" r="4" fill="#31557c" /><path d="M2 2l4 4M6 2 2 6" stroke="#d7e5f2" /></Icon>
                </button>
                <button aria-label="Kolečko" className="mt-2.5">
                    <Icon w={22} h={22}><path d="M11 .5h8c2 0 2.500.5 2.500 2.500v8A10.500 10.500 0 1 1 11 .5z" fill="#94b5d6" stroke="#c7d9ea" /><circle cx="11" cy="11" r="6.500" stroke="#c7d9ea" strokeWidth="2" /><circle cx="11" cy="11" r="6.500" stroke="#44719f" /><circle cx="11" cy="11" r="4.500" fill="#a0bedb" stroke="#44719f" /></Icon>
                </button>
                <span className="mt-2.5"><SmallCaret color="#2b5380" /></span>
                <span className="mt-1 h-px w-[26px] shrink-0 bg-[#31619a]" />
                <button aria-label="Posun" className="mt-1.5">
                    <Icon><path d="M4 14C3 11 1 9 .5 7c1-1 2 0 3 2L2.500 3c0-1 1.500-1 2 0L6 7 6 1.500c0-1 2-1 2 0L8.500 7l1.500-5c.5-1 2-.5 2 .5L11 8l2-3c1-1 2 0 1.500 1L12 12l-1 3.500H5z" fill="#b9cfe4" stroke="#31557c" strokeWidth=".6" /></Icon>
                </button>
                <button aria-label="Lupa" className="mt-2">
                    <Icon><path d="M10 10l5 5" stroke="#8c9bb0" strokeWidth="2.500" /><circle cx="6.500" cy="6.500" r="5.500" fill="#7ea5cc" stroke="#c7d9ea" /><path d="M4.500 3.500h3l1.500 1.500v4.500h-4.500z" fill="#e2ecf5" /></Icon>
                </button>
                <span className="mt-2"><SmallCaret color="#2b5380" /></span>
                <span className="mt-3"><Icon w={6} h={6}><path d="M0 0h6M0 1h6L3 3zM0 3h6L3 6z" fill="#6f8196" stroke="#6f8196" strokeWidth=".5" /></Icon></span>
            </div>
        </>
    );
}

function ViewWindow({ title, active, children }: { title: string; active?: boolean; children: ReactNode }) {
    const button = "flex h-[17px] w-[31px] items-center justify-center rounded-[3px] border";
    const plain = active ? "border-[#5f7a9c] bg-linear-to-b from-[#c6d8ec] to-[#a9c3df]" : "border-[#8493ac] bg-[#cbd8e6]";
    return (
        <section
            className={`flex min-h-0 min-w-0 flex-col rounded-t-md border pb-2 pl-[7px] pr-2 ${
                active ? "border-black bg-linear-to-b from-[#9ab5d3] via-[#b9d1ea] via-10% to-[#b9d1ea] shadow-[inset_-1px_-1px_0_#20c8f0]" : "border-[#555] bg-linear-to-b from-[#bccad9] via-[#d7e4f2] via-12% to-[#d7e4f2]"
            }`}
        >
            <header className="flex h-[29px] shrink-0 items-start gap-0.5 px-px pt-[9px]">
                <PartIcon />
                <h3 className={`flex-1 pl-0.5 text-[11px] leading-4 ${active ? "text-black" : "text-[#4a5058]"}`}>{title}</h3>
                <button aria-label={`Minimalizovat ${title}`} className={`${button} ${plain}`}>
                    <Icon w={11} h={9}><rect x=".5" y="4.500" width="10" height="4" rx="1" fill="#fff" stroke="#535a68" /></Icon>
                </button>
                <button aria-label={`Obnovit ${title}`} className={`${button} ${plain}`}>
                    <Icon w={11} h={9}><rect x=".5" y=".5" width="10" height="8" rx="1" fill="#fff" stroke="#535a68" /><rect x="3.500" y="3.500" width="4" height="2" fill="#ccd" stroke="#535a68" /></Icon>
                </button>
                <button aria-label={`Zavřít ${title}`} className={`${button} ${active ? "border-[#5b2a24] bg-linear-to-b from-[#e6a294] via-[#c4452c] to-[#d0654a]" : plain}`}>
                    <Icon w={12} h={10}><path d="M1 .5h3l2 2 2-2h3L8 5l3 4.500H8l-2-2-2 2H1L4 5z" fill="#fff" stroke="#535a68" /></Icon>
                </button>
            </header>
            <div className="relative min-h-0 flex-1 border border-b-white border-l-[#808080] border-r-white border-t-[#808080] bg-[#004c96]">
                {children}
                {active ? <NavigationBar /> : <div className="absolute right-2.5 top-[11px] h-[17px] w-[17px] border-[4px] border-[#6c95bf] bg-[#5f8aba] outline outline-[#46729f]" />}
            </div>
        </section>
    );
}

/* ---------- document tabs and status bar ---------- */

function DocumentTabs() {
    const stripButton = "flex h-5 w-5 items-center justify-center border border-[#555] bg-[#e4e4e4]";
    return (
        <div className="flex h-[22px] shrink-0 items-start border-t border-[#777] bg-linear-to-b from-[#d6d6d6] to-[#bdbdbd] pt-0.5 text-[11px]">
            <button aria-label="Kaskáda" className={stripButton}>
                <Icon><rect x=".5" y="1.500" width="10" height="8" fill="#fff" stroke="#333" /><rect x="2.500" y="4.500" width="10" height="8" fill="#fff" stroke="#333" /><rect x="4.500" y="7.500" width="11" height="8" fill="#fff" stroke="#333" /><path d="M5 9h10" stroke="#333" /></Icon>
            </button>
            <button aria-label="Uspořádat" className={stripButton}>
                <Icon><path d="M.5 2.500h6v4h-6zM9.500 2.500h6v4h-6zM.5 10.500h6v4h-6zM9.500 10.500h6v4h-6z" fill="#fff" stroke="#333" /></Icon>
            </button>
            <button aria-label="Seznam dokumentů" className={stripButton}>
                <Icon w={9} h={5}><path d="M0 5h9L4.500 0z" fill="#333" /></Icon>
            </button>
            <button className="flex h-[17px] w-[134px] items-center gap-1.5 rounded-b-md border border-t-0 border-[#666] bg-white pl-2">
                3D_Prusecnice.ipt:1
                <Icon w={9} h={8}><path d="M1 .5h2.500l1 1.500 1-1.500H8L6 4l2 3.500H5.500l-1-1.500-1 1.500H1L3 4z" fill="#fff" stroke="#666" strokeWidth=".8" /></Icon>
            </button>
            {["3D_Prusecnice.ipt:2", "3D_Prusecnice.ipt:3", "3D_Prusecnice.ipt:4"].map((name) => (
                <button key={name} className="flex h-[17px] w-[121px] items-center rounded-b-md border border-t-0 border-[#666] bg-linear-to-b from-[#d8d8d8] to-[#bcbcbc] pl-2">
                    {name}
                </button>
            ))}
        </div>
    );
}

function StatusBar() {
    return (
        <footer className="flex h-[25px] shrink-0 items-center border-b border-l border-b-[#777] border-l-[#8a8a8a] bg-linear-to-b from-white to-[#b4b4b4] text-[11px] text-black">
            <span className="w-[448px]">Pro nápovědu stiskněte F1</span>
            <span className="h-5 w-px bg-[#c4c4c4]" />
            <button aria-label="Tolerance" className="ml-1.5 flex items-center gap-1">
                <Icon w={17} h={17}>
                    <path d="M1 3.500h4M3 1.500v4M6 6l3-5M11 3.500h4M.5 8v8M15.500 8v8M2 11.500h12" stroke="#333" />
                    <path d="M1 11.500l3-2v4zM15 11.500l-3-2v4z" fill="#333" />
                </Icon>
                <SmallCaret />
            </button>
            <span className="ml-auto w-[38px] border-l border-[#c4c4c4] pl-1.5">1</span>
            <span className="w-[38px] border-l border-[#c4c4c4] pl-1.5">1</span>
            <span className="flex h-5 w-5 items-end justify-end border-l border-[#c4c4c4]">
                <Icon w={9} h={9}><path d="M6 0h2v2H6zM3 3h2v2H3zM6 3h2v2H6zM0 6h2v2H0zM3 6h2v2H3zM6 6h2v2H6z" fill="#f4f4f4" /></Icon>
            </span>
        </footer>
    );
}

export default function App() {
    return (
        <div className={`${FONT} flex h-screen min-h-[600px] w-full flex-col overflow-hidden rounded-[7px] border-b-2 border-r border-t-2 border-[#1c1c28] bg-linear-to-b from-[#bcd5f0] via-[#d5e6f7] via-25% to-[#b6d3f2] pb-1.5 pl-1.5 pr-[7px] text-[#222]`}>
            <div className="relative flex h-[29px] shrink-0">
                <AppButton />
                <h1 className="flex-1 pl-[52px] text-center text-[11px] leading-7 text-black">3D_Prusecnice.ipt:1</h1>
                <SearchBar />
                <WindowButtons />
            </div>
            <RibbonTabs />
            <Ribbon />
            <Toolbar />
            <div className="flex min-h-0 flex-1">
                <BrowserPanel />
                <main className="flex min-w-0 flex-1 flex-col bg-[#f0f0f0]">
                    <div className="grid min-h-0 flex-1 grid-cols-2 grid-rows-2 px-0.5 pt-px">
                        <ViewWindow title="3D_Prusecnice.ipt:4">{frontScene}</ViewWindow>
                        <ViewWindow title="3D_Prusecnice.ipt:2">{sideScene}</ViewWindow>
                        <ViewWindow title="3D_Prusecnice.ipt:3">{topScene}</ViewWindow>
                        <ViewWindow title="3D_Prusecnice.ipt:1" active>{isoScene}</ViewWindow>
                    </div>
                    <DocumentTabs />
                </main>
            </div>
            <StatusBar />
        </div>
    );
}
